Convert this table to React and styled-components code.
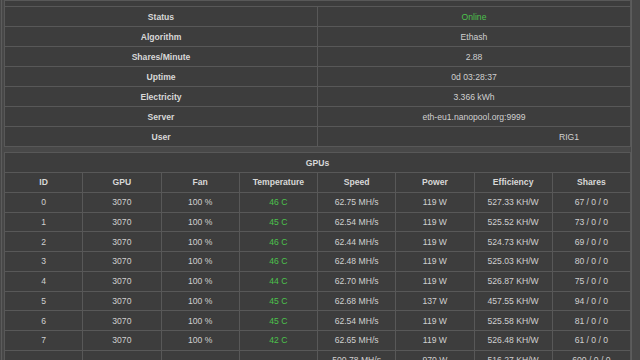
import React from "react";
import styled, { createGlobalStyle } from "styled-components";

const Global = createGlobalStyle`
  html, body { margin: 0; padding: 0; background: #474747; overflow: hidden; }
  body { font-family: "Liberation Sans", Arial, sans-serif; }
  #root { width: 640px; height: 360px; overflow: hidden; }
`;

const Page = styled.div`
  padding-left: 1px;
  height: 360px;
  overflow: hidden;
`;

const Panel = styled.div`
  box-sizing: border-box;
  width: 631px;
  border-left: 1px solid #5c5c5c;
  border-right: 1px solid #5c5c5c;
  padding: 0 0 0 2px;
  display: flex;
  flex-direction: column;
  gap: 5px;
  background: #484848;
`;

const Table = styled.table`
  width: 627px;
  border-collapse: collapse;
  table-layout: fixed;
  background: #3d3d3d;
  border: 1px solid #585858;
  color: #d4d4d4;
  font-size: 8.6px;
`;

const CutRow = styled.tr`
  height: 6px;
  td { border: 1px solid #585858; border-top: none; padding: 0; }
`;

const Row = styled.tr`
  height: ${(p) => p.$h || 20}px;
`;

const Label = styled.td`
  border: 1px solid #585858;
  text-align: center;
  font-weight: bold;
  color: #d8d8d8;
  padding: 0;
  white-space: nowrap;
  overflow: hidden;
`;

const Value = styled.td`
  border: 1px solid #585858;
  text-align: ${(p) => (p.$right ? "right" : "center")};
  padding: 0 ${(p) => (p.$right ? "51px" : "0")} 0 0;
  color: ${(p) => (p.$green ? "#4cc24c" : "#d0d0d0")};
  white-space: nowrap;
  overflow: hidden;
`;

const Title = styled.td`
  border: 1px solid #585858;
  text-align: center;
  font-weight: bold;
  color: #d8d8d8;
  padding: 0;
`;

const info = [
  ["Status", "Online", { green: true }],
  ["Algorithm", "Ethash"],
  ["Shares/Minute", "2.88"],
  ["Uptime", "0d 03:28:37"],
  ["Electricity", "3.366 kWh"],
  ["Server", "eth-eu1.nanopool.org:9999"],
  ["User", "RIG1", { right: true }],
];

const gpus = [
  [0, "46 C", "62.75 MH/s", "119 W", "527.33 KH/W", "67 / 0 / 0"],
  [1, "45 C", "62.54 MH/s", "119 W", "525.52 KH/W", "73 / 0 / 0"],
  [2, "46 C", "62.44 MH/s", "119 W", "524.73 KH/W", "69 / 0 / 0"],
  [3, "46 C", "62.48 MH/s", "119 W", "525.03 KH/W", "80 / 0 / 0"],
  [4, "44 C", "62.70 MH/s", "119 W", "526.87 KH/W", "75 / 0 / 0"],
  [5, "45 C", "62.68 MH/s", "137 W", "457.55 KH/W", "94 / 0 / 0"],
  [6, "45 C", "62.54 MH/s", "119 W", "525.58 KH/W", "81 / 0 / 0"],
  [7, "42 C", "62.65 MH/s", "119 W", "526.48 KH/W", "61 / 0 / 0"],
];

const headers = ["ID", "GPU", "Fan", "Temperature", "Speed", "Power", "Efficiency", "Shares"];

export default function App() {
  return (
    <>
      <Global />
      <Page>
        <Panel>
          <Table>
            <tbody>
              <CutRow>
                <td colSpan={2} />
              </CutRow>
              {info.map(([k, v, o = {}]) => (
                <Row key={k}>
                  <Label>{k}</Label>
                  <Value $green={o.green} $right={o.right}>{v}</Value>
                </Row>
              ))}
            </tbody>
          </Table>
          <Table>
            <tbody>
              <Row $h={20}>
                <Title colSpan={8}>GPUs</Title>
              </Row>
              <Row $h={19.75}>
                {headers.map((h) => (
                  <Label key={h}>{h}</Label>
                ))}
              </Row>
              {gpus.map(([id, t, s, p, e, sh]) => (
                <Row key={id} $h={19.75}>
                  <Value>{id}</Value>
                  <Value>3070</Value>
                  <Value>100 %</Value>
                  <Value $green>{t}</Value>
                  <Value>{s}</Value>
                  <Value>{p}</Value>
                  <Value>{e}</Value>
                  <Value>{sh}</Value>
                </Row>
              ))}
              <Row $h={19.75}>
                <Value />
                <Value />
                <Value />
                <Value />
                <Value>500.78 MH/s</Value>
                <Value>970 W</Value>
                <Value>516.27 KH/W</Value>
                <Value>600 / 0 / 0</Value>
              </Row>
            </tbody>
          </Table>
        </Panel>
      </Page>
    </>
  );
}
